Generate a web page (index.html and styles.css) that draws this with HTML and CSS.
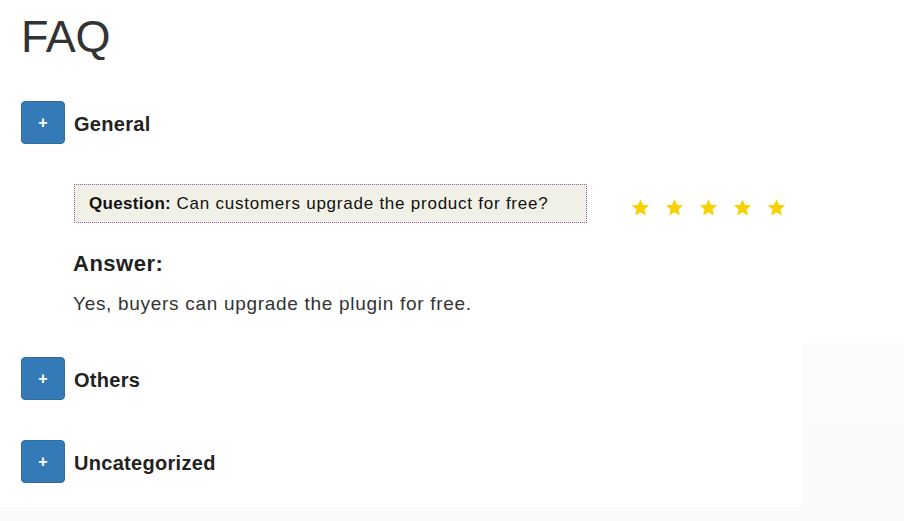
FILE: index.html
```html
<!DOCTYPE html>
<html>
<head>
<meta charset="utf-8">
<link rel="stylesheet" href="styles.css">
</head>
<body>
<div class="page">
  <h1 class="title">FAQ</h1>

  <div class="cat">
    <div class="cat-head">
      <span class="btn">+</span>
      <span class="cat-name">General</span>
    </div>
    <div class="cat-body">
      <div class="q-row">
        <div class="q-box"><b>Question:</b> Can customers upgrade the product for free?</div>
        <div class="stars">
          <svg class="star" viewBox="0 0 24 24"><path d="M12 1.5l3.1 7.2 7.8.6-5.9 5.1 1.8 7.6L12 18l-6.8 4 1.8-7.6L1.1 9.3l7.8-.6z"/></svg>
          <svg class="star" viewBox="0 0 24 24"><path d="M12 1.5l3.1 7.2 7.8.6-5.9 5.1 1.8 7.6L12 18l-6.8 4 1.8-7.6L1.1 9.3l7.8-.6z"/></svg>
          <svg class="star" viewBox="0 0 24 24"><path d="M12 1.5l3.1 7.2 7.8.6-5.9 5.1 1.8 7.6L12 18l-6.8 4 1.8-7.6L1.1 9.3l7.8-.6z"/></svg>
          <svg class="star" viewBox="0 0 24 24"><path d="M12 1.5l3.1 7.2 7.8.6-5.9 5.1 1.8 7.6L12 18l-6.8 4 1.8-7.6L1.1 9.3l7.8-.6z"/></svg>
          <svg class="star" viewBox="0 0 24 24"><path d="M12 1.5l3.1 7.2 7.8.6-5.9 5.1 1.8 7.6L12 18l-6.8 4 1.8-7.6L1.1 9.3l7.8-.6z"/></svg>
        </div>
      </div>
      <h3 class="a-title">Answer:</h3>
      <p class="a-text">Yes, buyers can upgrade the plugin for free.</p>
    </div>
  </div>

  <div class="cat cat-2">
    <div class="cat-head">
      <span class="btn">+</span>
      <span class="cat-name">Others</span>
    </div>
  </div>

  <div class="cat cat-3">
    <div class="cat-head">
      <span class="btn">+</span>
      <span class="cat-name">Uncategorized</span>
    </div>
  </div>
</div>
</body>
</html>
```

FILE: styles.css
```css
html, body {
  margin: 0;
  padding: 0;
}
body {
  font-family: "Liberation Sans", Arial, sans-serif;
  color: #333;
  width: 904px;
  height: 521px;
  overflow: hidden;
  background: linear-gradient(to bottom, #ffffff 0, #ffffff 342px, #fbfbfb 346px, #fafafa 521px);
}
.page {
  background: #fff;
  width: 781px;
  height: 507px;
  padding-left: 21px;
  overflow: hidden;
}
.title {
  margin: 0;
  padding-top: 11px;
  font-size: 45px;
  font-weight: normal;
  line-height: 52px;
  color: #333;
  letter-spacing: -0.2px;
}
.cat {
  margin-top: 38px;
}
.cat-head {
  display: flex;
  align-items: center;
  gap: 9px;
  height: 43px;
}
.btn {
  box-sizing: border-box;
  width: 44px;
  height: 43px;
  background: #337ab7;
  border: 1px solid #2e6da4;
  border-radius: 4px;
  color: #fff;
  font-size: 16px;
  font-weight: bold;
  display: flex;
  align-items: center;
  justify-content: center;
  line-height: 1;
}
.cat-name {
  font-size: 20px;
  font-weight: bold;
  color: #222;
  letter-spacing: 0.3px;
  padding-top: 3px;
}
.cat-body {
  padding-left: 53px;
  padding-top: 40px;
}
.q-row {
  display: flex;
  align-items: center;
}
.q-box {
  box-sizing: border-box;
  width: 513px;
  height: 39px;
  border: 1px dotted #9b5f9b;
  background: #f1f0e6;
  padding: 0 14px;
  display: flex;
  align-items: center;
  font-size: 17px;
  color: #111;
  white-space: pre;
  letter-spacing: 0.76px;
}
.q-box b {
  font-weight: bold;
  letter-spacing: 0.3px;
}
.stars {
  display: flex;
  gap: 15px;
  margin-left: 44px;
  margin-top: 7px;
}
.star {
  width: 19px;
  height: 19px;
  fill: #f7d200;
}
.a-title {
  margin: 28px 0 0 -1px;
  font-size: 22px;
  line-height: 26px;
  font-weight: bold;
  color: #222;
  letter-spacing: 0.5px;
}
.a-text {
  margin: 15px 0 0 -1px;
  font-size: 19px;
  line-height: 24px;
  color: #333;
  letter-spacing: 0.7px;
}
.cat-2 {
  margin-top: 41px;
}
.cat-3 {
  margin-top: 40px;
}
```
